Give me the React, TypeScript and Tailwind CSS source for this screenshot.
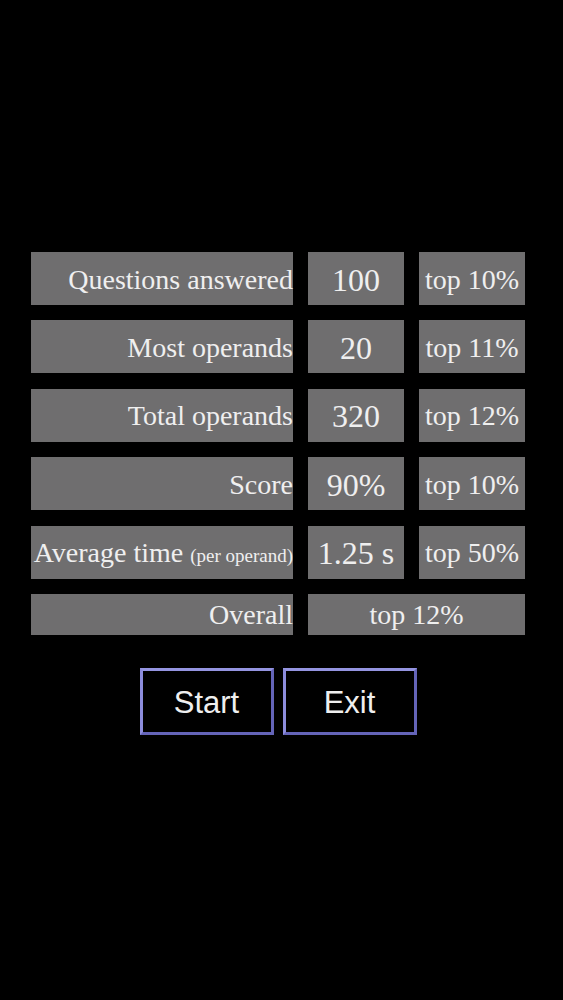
import React from "react";

const serif = { fontFamily: '"Liberation Serif", "Times New Roman", serif' };

function Cell({ children, className = "" }: { children: React.ReactNode; className?: string }) {
  return (
    <div className={`bg-[#6f6e6f] text-[#efefef] flex items-center ${className}`}>{children}</div>
  );
}

export default function App() {
  const rows = [
    { label: "Questions answered", value: "100", rank: "top 10%" },
    { label: "Most operands", value: "20", rank: "top 11%" },
    { label: "Total operands", value: "320", rank: "top 12%" },
    { label: "Score", value: "90%", rank: "top 10%" },
  ];
  return (
    <div className="w-[563px] h-[1000px] bg-black flex flex-col" style={serif}>
      <div className="pt-[252px] pl-[31px]">
        <div className="grid grid-cols-[262px_96px_106px] gap-x-[15px] gap-y-[15.4px] w-[494px]">
          {rows.map((r) => (
            <React.Fragment key={r.label}>
              <Cell className="h-[53px] justify-end text-[28px] pt-[2px]">{r.label}</Cell>
              <Cell className="h-[53px] justify-center text-[32px] pt-[2px]">{r.value}</Cell>
              <Cell className="h-[53px] justify-center text-[28px] pt-[2px]">{r.rank}</Cell>
            </React.Fragment>
          ))}
          <Cell className="h-[53px] justify-end text-[28px] whitespace-nowrap pt-[2px]">
            <span>
              Average time <span className="text-[19px]">(per operand)</span>
            </span>
          </Cell>
          <Cell className="h-[53px] justify-center text-[32px] pt-[2px]">1.25 s</Cell>
          <Cell className="h-[53px] justify-center text-[28px] pt-[2px]">top 50%</Cell>
          <Cell className="h-[41px] justify-end text-[28px] pt-[2px]">Overall</Cell>
          <Cell className="h-[41px] col-span-2 justify-center text-[28px] pt-[2px]">top 12%</Cell>
        </div>
        <div className="flex justify-center gap-[9px] mt-[33px] w-[494px]">
          {["Start", "Exit"].map((b) => (
            <button
              key={b}
              className="w-[134px] h-[67px] bg-black text-[#efefef] text-[31px] pt-[4px] border-[3px] border-t-[#9494e0] border-l-[#8c8cdc] border-r-[#6464b8] border-b-[#6464b8] flex items-center justify-center"
              style={{ fontFamily: '"Liberation Sans", Arial, sans-serif' }}
            >
              {b}
            </button>
          ))}
        </div>
      </div>
    </div>
  );
}
